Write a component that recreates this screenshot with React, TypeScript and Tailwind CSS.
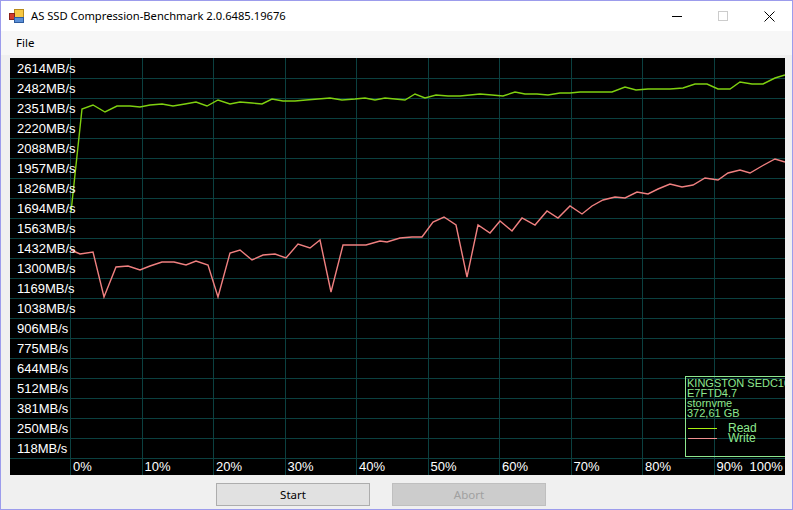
import React from "react";

const yLabels = [2614, 2482, 2351, 2220, 2088, 1957, 1826, 1694, 1563, 1432, 1300, 1169, 1038, 906, 775, 644, 512, 381, 250, 118];
const xLabels = ["0%", "10%", "20%", "30%", "40%", "50%", "60%", "70%", "80%"];

const green: [number, number][] = [
  [71, 212], [82, 109], [93, 105], [105, 112], [117, 106], [130, 106], [140, 107], [150, 105], [162, 104],
  [173, 106], [185, 104], [196, 102], [207, 106], [218, 100], [230, 104], [240, 102], [252, 103], [262, 104],
  [272, 99], [283, 101], [295, 101], [306, 100], [318, 99], [330, 98], [342, 100], [355, 99], [365, 98],
  [375, 100], [385, 98], [395, 99], [405, 100], [415, 94], [425, 98], [436, 95], [448, 96], [460, 96],
  [470, 95], [480, 94], [492, 95], [503, 96], [515, 92], [525, 94], [537, 94], [548, 95], [560, 93],
  [570, 93], [580, 92], [590, 92], [600, 92], [612, 92], [625, 87], [636, 90], [648, 89], [660, 89],
  [670, 89], [683, 88], [695, 84], [707, 84], [718, 89], [730, 89], [740, 82], [752, 84], [763, 84],
  [775, 78], [785, 75],
];

const pink: [number, number][] = [
  [71, 250], [80, 254], [93, 252], [104, 297], [116, 267], [128, 266], [140, 270], [150, 266], [162, 262],
  [174, 262], [186, 265], [196, 261], [208, 265], [218, 297], [230, 253], [240, 250], [252, 260], [263, 255],
  [275, 254], [286, 258], [298, 244], [310, 248], [320, 240], [331, 292], [343, 245], [355, 245], [366, 245],
  [380, 241], [387, 242], [400, 238], [412, 237], [422, 237], [433, 222], [444, 217], [456, 225], [467, 277],
  [478, 225], [490, 233], [500, 221], [512, 231], [522, 218], [535, 225], [547, 211], [558, 218], [570, 206],
  [582, 214], [592, 206], [603, 200], [615, 197], [625, 198], [637, 192], [648, 194], [658, 189], [670, 184],
  [682, 187], [693, 185], [705, 178], [718, 180], [728, 173], [740, 170], [750, 173], [762, 166], [775, 159],
  [785, 162],
];

const toPath = (pts: [number, number][]) =>
  pts.map(([x, y], i) => `${i === 0 ? "M" : "L"}${x - 10} ${y - 58}`).join(" ");

const vLines = Array.from({ length: 10 }, (_, k) => Math.round(60 + 71.5 * k) + 0.5);
const hLines = Array.from({ length: 20 }, (_, k) => 20 * (k + 1) + 0.5);

function AppIcon() {
  return (
    <svg width="16" height="16" viewBox="0 0 16 16">
      <rect x="5.5" y="1.5" width="9" height="8" fill="#f6c744" stroke="#b88a1a" />
      <rect x="0.5" y="5.5" width="5" height="6" fill="#d33b2c" stroke="#8a2018" />
      <rect x="5.5" y="9.5" width="9" height="5" fill="#5b8fd6" stroke="#2d5b9e" />
    </svg>
  );
}

const uiFont = { fontFamily: '"Segoe UI", "Noto Sans", sans-serif' };

export default function App() {
  return (
    <div className="w-[793px] h-[510px] border border-[#9c9cec] bg-[#f0f0f0] flex flex-col overflow-hidden">
      {/* Title bar */}
      <div className="h-[30px] bg-white flex items-center shrink-0">
        <div className="ml-[8px] mr-[6px] flex items-center">
          <AppIcon />
        </div>
        <span className="text-[11.2px] text-black" style={uiFont}>
          AS SSD Compression-Benchmark 2.0.6485.19676
        </span>
        <div className="flex-1" />
        <div className="w-[46px] h-[30px] flex items-center justify-center">
          <div className="w-[10px] h-px bg-black" />
        </div>
        <div className="w-[46px] h-[30px] flex items-center justify-center">
          <div className="w-[10px] h-[10px] border border-[#cccccc]" />
        </div>
        <div className="w-[46px] h-[30px] flex items-center justify-center">
          <svg width="11" height="11" viewBox="0 0 11 11">
            <path d="M0.5 0.5 L10.5 10.5 M10.5 0.5 L0.5 10.5" stroke="#000" strokeWidth="1" />
          </svg>
        </div>
      </div>

      {/* Menu bar */}
      <div className="h-[24px] bg-[#f7f7f7] flex items-center shrink-0">
        <span className="ml-[15px] text-[11.5px] text-black" style={uiFont}>
          File
        </span>
      </div>

      {/* Chart */}
      <div
        className="relative mt-[3px] ml-[9px] w-[775px] h-[417px] bg-black overflow-hidden shrink-0 text-white"
        style={{ fontFamily: '"Liberation Sans", Arial, sans-serif' }}
      >
        <svg className="absolute inset-0" width="775" height="417" viewBox="0 0 775 417">
          {hLines.map((y) => (
            <line key={"h" + y} x1="0" x2="775" y1={y} y2={y} stroke="#0b4040" strokeWidth="1" />
          ))}
          {vLines.map((x) => (
            <line key={"v" + x} x1={x} x2={x} y1="0" y2="417" stroke="#0b4040" strokeWidth="1" />
          ))}
          <path d={toPath(pink)} fill="none" stroke="#f08080" strokeWidth="1.4" />
          <path d={toPath(green)} fill="none" stroke="#7fd010" strokeWidth="1.4" />
        </svg>

        <div className="relative flex flex-col">
          {yLabels.map((v) => (
            <div key={v} className="h-[20px] flex items-center pl-[7px] text-[13px] leading-none">
              {v}MB/s
            </div>
          ))}
          <div className="h-[17px] flex items-center text-[13px] leading-none">
            <div className="w-[60px] shrink-0" />
            {xLabels.map((l) => (
              <div key={l} className="w-[71.5px] shrink-0 pl-[3px]">
                {l}
              </div>
            ))}
            <div className="pl-[3px] flex gap-[7px]">
              <span>90%</span>
              <span>100%</span>
            </div>
          </div>
        </div>

        {/* Legend */}
        <div className="absolute left-[675px] top-[318px] w-[120px] h-[81px] border border-[#8ee88e] text-[#8ee88e] text-[11px] leading-[10px] pl-[1px] pt-[1px] whitespace-nowrap">
          <div>KINGSTON SEDC1000BM8480G</div>
          <div>E7FTD4.7</div>
          <div>stornvme</div>
          <div>372,61 GB</div>
          <div className="mt-[5px] flex items-center text-[12px]">
            <div className="ml-[1px] w-[29px] h-px bg-[#a8f010]" />
            <span className="ml-[11px]">Read</span>
          </div>
          <div className="flex items-center text-[12px]">
            <div className="ml-[1px] w-[29px] h-px bg-[#f09090]" />
            <span className="ml-[11px]">Write</span>
          </div>
        </div>
      </div>

      {/* Buttons */}
      <div className="flex mt-[8px] ml-[215px] gap-[22px]" style={uiFont}>
        <div className="w-[154px] h-[23px] bg-[#e1e1e1] border border-[#adadad] flex items-center justify-center text-[11.5px] text-black">
          Start
        </div>
        <div className="w-[154px] h-[23px] bg-[#cccccc] border border-[#bfbfbf] flex items-center justify-center text-[11.5px] text-[#a0a0a0]">
          Abort
        </div>
      </div>
    </div>
  );
}
